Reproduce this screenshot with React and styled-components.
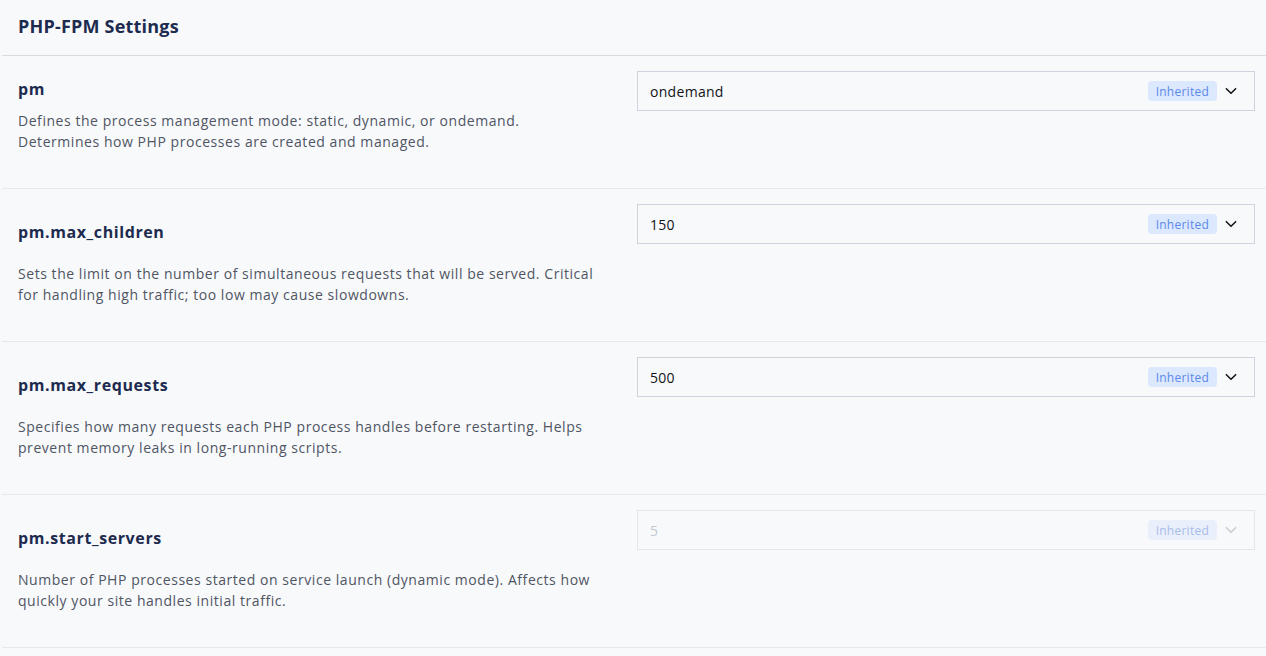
import React from 'react';
import styled, { createGlobalStyle } from 'styled-components';

const GlobalStyle = createGlobalStyle`
  html, body {
    margin: 0;
    padding: 0;
    background: #f8f9fb;
  }
  body {
    font-family: 'Open Sans', 'DejaVu Sans', sans-serif;
    color: #4b5160;
  }
`;

const Page = styled.div`
  min-height: 100vh;
  background: #f8f9fb;
`;

const Section = styled.section`
  margin-left: 2px;
`;

const Header = styled.div`
  height: 56px;
  display: flex;
  align-items: center;
  padding: 0 16px 3px;
  box-sizing: border-box;
  border-bottom: 1px solid #d8dbe0;
`;

const HeaderTitle = styled.h2`
  margin: 0;
  font-size: 18px;
  font-weight: 700;
  color: #1d2b4f;
  letter-spacing: 0.2px;
`;

const Row = styled.div`
  display: grid;
  grid-template-columns: 582px 1fr;
  column-gap: 37px;
  padding: 15px 11px 36px 16px;
  border-bottom: 1px solid #e6e8eb;
`;

const Info = styled.div`
  display: flex;
  flex-direction: column;
`;

const TitleWrap = styled.div`
  padding: ${(p) => (p.$spaced ? '16px 0 19px' : '6px 0 9px')};
`;

const Title = styled.h3`
  margin: 0;
  font-size: 16px;
  line-height: 24px;
  font-weight: 700;
  color: #1d2b4f;
  letter-spacing: 0.6px;
`;

const Description = styled.p`
  margin: 0;
  font-size: 14px;
  line-height: 21px;
  letter-spacing: 0.55px;
  color: #4f5563;
`;

const Select = styled.div`
  height: 40px;
  box-sizing: border-box;
  border: 1px solid ${(p) => (p.$disabled ? '#e3e6ea' : '#cdd4de')};
  display: flex;
  align-items: center;
  padding: 0 16px 0 12px;
  background: #f8f9fb;
`;

const Value = styled.span`
  flex: 1;
  font-size: 14px;
  letter-spacing: 0.3px;
  color: ${(p) => (p.$disabled ? '#c4c8cf' : '#111318')};
`;

const Badge = styled.span`
  height: 20px;
  padding: 0 8px;
  border-radius: 4px;
  display: inline-flex;
  align-items: center;
  font-size: 12px;
  letter-spacing: 0.25px;
  background: ${(p) => (p.$disabled ? '#e9effb' : '#dce8fd')};
  color: ${(p) => (p.$disabled ? '#a9bde8' : '#5b89ea')};
  margin-right: 7px;
`;

const Chevron = ({ disabled }) => (
  <svg width="14" height="14" viewBox="0 0 24 24" fill="none"
    stroke={disabled ? '#c8ccd2' : '#111318'} strokeWidth="2.6"
    strokeLinecap="round" strokeLinejoin="round">
    <path d="M4 8l8 8 8-8" />
  </svg>
);

const settings = [
  {
    name: 'pm',
    value: 'ondemand',
    desc: 'Defines the process management mode: static, dynamic, or ondemand. Determines how PHP processes are created and managed.',
  },
  {
    name: 'pm.max_children',
    value: '150',
    desc: 'Sets the limit on the number of simultaneous requests that will be served. Critical for handling high traffic; too low may cause slowdowns.',
    spaced: true,
  },
  {
    name: 'pm.max_requests',
    value: '500',
    desc: 'Specifies how many requests each PHP process handles before restarting. Helps prevent memory leaks in long-running scripts.',
    spaced: true,
  },
  {
    name: 'pm.start_servers',
    value: '5',
    desc: 'Number of PHP processes started on service launch (dynamic mode). Affects how quickly your site handles initial traffic.',
    spaced: true,
    disabled: true,
  },
];

export default function App() {
  return (
    <Page>
      <GlobalStyle />
      <Section>
        <Header>
          <HeaderTitle>PHP-FPM Settings</HeaderTitle>
        </Header>
        {settings.map((s) => (
          <Row key={s.name}>
            <Info>
              <TitleWrap $spaced={s.spaced}>
                <Title>{s.name}</Title>
              </TitleWrap>
              <Description>{s.desc}</Description>
            </Info>
            <div>
              <Select $disabled={s.disabled}>
                <Value $disabled={s.disabled}>{s.value}</Value>
                <Badge $disabled={s.disabled}>Inherited</Badge>
                <Chevron disabled={s.disabled} />
              </Select>
            </div>
          </Row>
        ))}
      </Section>
    </Page>
  );
}
